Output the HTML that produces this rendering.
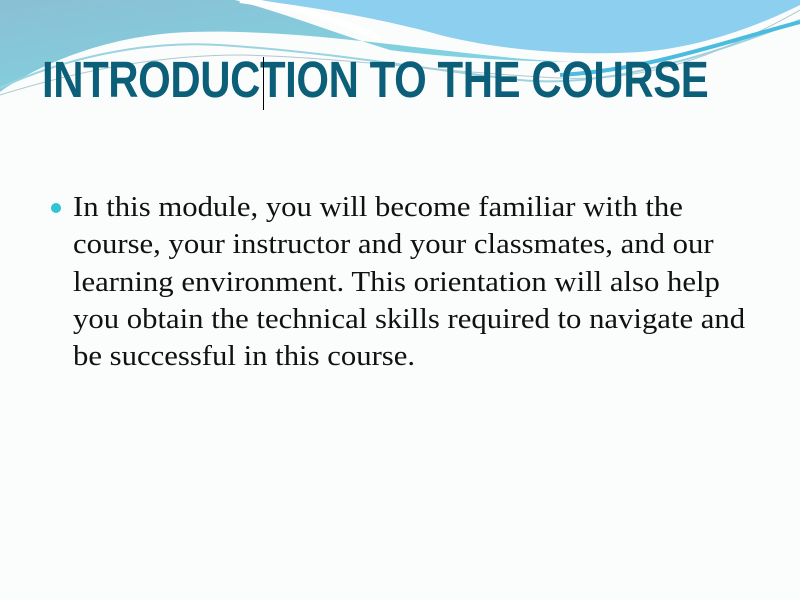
<!DOCTYPE html>
<html><head><meta charset="utf-8"><style>
html,body{margin:0;padding:0;width:800px;height:600px;overflow:hidden;background:#fbfcfc}
.t{position:absolute;left:42px;top:50px;font-family:"Liberation Sans",sans-serif;font-weight:bold;font-size:51px;color:#0b5f78;white-space:nowrap;transform:scaleX(0.822);transform-origin:0 0;letter-spacing:-0.5px}
.b{position:absolute;left:73px;top:189px;font-family:"Liberation Serif",serif;font-size:28px;line-height:37.3px;color:#111;white-space:nowrap;transform:scaleX(1.097);transform-origin:0 0}
.dot{position:absolute;left:51px;top:203px;width:10px;height:10px;border-radius:50%;background:#2ec4d4}
.cur{position:absolute;left:263px;top:57px;width:1px;height:53px;background:#000}
</style></head><body>
<svg width="800" height="120" style="position:absolute;left:0;top:0">
<defs>
<linearGradient id="g2" x1="0" y1="0" x2="1" y2="1"><stop offset="0" stop-color="#8bbfd4"/><stop offset="1" stop-color="#7bdbe6"/></linearGradient>
</defs>
<path d="M0 0 H235 C290 15 340 35 390 50 C450 58 530 62 590 62 C480 62 330 28 190 32 C100 35 30 70 0 92 Z" fill="url(#g2)"/>
<path d="M255 0 H800 V5 C760 25 700 48 640 52 C570 56 500 50 440 35 C380 18 300 5 255 0Z" fill="#8ccfee"/>
<path d="M240 0 C300 8 340 20 380 38" stroke="#fff" stroke-width="6" fill="none"/>
<path d="M0 88 C60 60 140 40 220 45 C330 52 430 70 520 80 C600 88 700 60 800 20" stroke="#9bd4e0" stroke-width="2" fill="none"/>
<path d="M0 95 C80 70 160 55 240 55 C340 57 440 72 560 78 C650 82 720 55 800 10" stroke="#b0c8d0" stroke-width="1" fill="none"/>
<path d="M560 75 C650 70 730 40 800 22" stroke="#4cbbe0" stroke-width="4" fill="none"/>
</svg>
<div class="t">INTRODUCTION TO THE COURSE</div>
<div class="cur"></div>
<div class="dot"></div>
<div class="b">In this module, you will become familiar with the<br>course, your instructor and your classmates, and our<br>learning environment. This orientation will also help<br>you obtain the technical skills required to navigate and<br>be successful in this course.</div>
</body></html>
